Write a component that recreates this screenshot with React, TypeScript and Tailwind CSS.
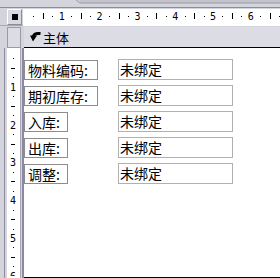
import React from "react";

const CM = 37.8;
const STEP = CM / 4;

const rows = [
  { label: "物料编码:", w: "w-[74px]" },
  { label: "期初库存:", w: "w-[74px]" },
  { label: "入库:", w: "w-[44px]" },
  { label: "出库:", w: "w-[44px]" },
  { label: "调整:", w: "w-[44px]" },
];

// horizontal ruler, origin sits at x=24 of the page (svg starts at x=23)
const HRuler: React.FC = () => {
  const marks = [];
  for (let k = 1; k * STEP < 260; k++) {
    const x = 1 + k * STEP;
    if (k % 4 === 0) {
      marks.push(
        <text key={k} x={x} y={11} textAnchor="middle" fontSize="10" fontFamily="'DejaVu Sans Mono', monospace" fill="#000">
          {k / 4}
        </text>
      );
    } else if (k % 4 === 2) {
      marks.push(<rect key={k} x={Math.round(x)} y={4} width={1} height={6} fill="#000" />);
    } else {
      marks.push(<rect key={k} x={Math.round(x)} y={7} width={1} height={1} fill="#000" />);
    }
  }
  return (
    <svg width="257" height="17" className="block">
      {marks}
    </svg>
  );
};

// vertical ruler, origin sits at y=51
const VRuler: React.FC = () => {
  const marks = [];
  for (let k = 1; k * STEP < 232; k++) {
    const y = 1 + k * STEP;
    if (k % 4 === 0) {
      marks.push(
        <text key={k} x={6} y={y + 4} textAnchor="middle" fontSize="10" fontFamily="'DejaVu Sans Mono', monospace" fill="#000">
          {k / 4}
        </text>
      );
    } else if (k % 4 === 2) {
      marks.push(<rect key={k} x={4} y={Math.round(y)} width={4} height={1} fill="#000" />);
    } else {
      marks.push(<rect key={k} x={6} y={Math.round(y)} width={1} height={1} fill="#000" />);
    }
  }
  return (
    <svg width="13" height="228" className="block">
      {marks}
    </svg>
  );
};

export default function App() {
  return (
    <div className="w-[280px] h-[278px] overflow-hidden bg-[#d4d4dc] flex flex-col font-['Noto_Sans_CJK_SC',sans-serif]">
      {/* top chrome */}
      <div className="h-[8px] border-b border-[#8c8c9c] shrink-0">
        <svg width="280" height="7" className="block">
          <path d="M78 0 L82 3 L280 3 L280 0 Z" fill="#c4c4cc" />
          <path d="M76 0 L80 3 L280 3" stroke="#9a9aa8" fill="none" />
        </svg>
      </div>

      {/* ruler row */}
      <div className="h-[18px] flex items-start pt-px shrink-0 border-b border-[#a8a8b4]">
        <div className="ml-[7px] w-[15px] h-[16px] bg-[#d8d8e0] border-t border-l border-white border-r border-b border-r-[#8c8c9c] border-b-[#8c8c9c] flex items-center justify-center">
          <div className="w-[6px] h-[6px] bg-black" />
        </div>
        <div className="ml-[1px] flex-1 h-[17px] bg-white">
          <HRuler />
        </div>
      </div>

      {/* section header */}
      <div className="h-[22px] flex items-start pt-[1px] shrink-0">
        <div className="ml-[7px] w-[14px] h-[21px] bg-[#dcdce4] border border-[#9a9aa8]" />
        <div className="ml-[3px] flex-1 h-[21px] bg-[#dcdce4] border-b border-black flex items-center pl-[6px]">
          <svg width="11" height="10" viewBox="0 0 11 10" className="block">
            <path d="M0 3.5 L7 3.5 L3 9.5 Z" fill="#000" />
            <path d="M3.5 5 C3.5 1.8 6.5 1.2 10.5 1.5" stroke="#000" strokeWidth="3" fill="none" />
          </svg>
          <span className="ml-[2px] text-[13px] leading-none text-black">主体</span>
        </div>
      </div>

      {/* body */}
      <div className="flex-1 flex min-h-0">
        <div className="ml-[4px] w-px bg-[#8c8c9c]" />
        <div className="ml-[2px] w-[14px] bg-white border-r border-[#a8a8b4]">
          <VRuler />
        </div>
        <div className="w-px bg-[#d4d4dc]" />
        <div className="w-[2px] bg-[#8a8aa8]" />
        <div className="flex-1 bg-white border-b border-black flex flex-col gap-[5px] pt-[11px]">
          {rows.map((r) => (
            <div key={r.label} className="flex items-start">
              <div className="w-[94px]">
                <div className={`${r.w} h-[20px] mt-px border border-[#8c8c8c] pl-[3px] text-[14px] leading-[18px] text-black whitespace-nowrap`}>
                  {r.label}
                </div>
              </div>
              <div className="w-[115px] h-[21px] border border-[#b0b0b0] pl-[1px] text-[14px] leading-[19px] text-black whitespace-nowrap">
                未绑定
              </div>
            </div>
          ))}
        </div>
      </div>
    </div>
  );
}
